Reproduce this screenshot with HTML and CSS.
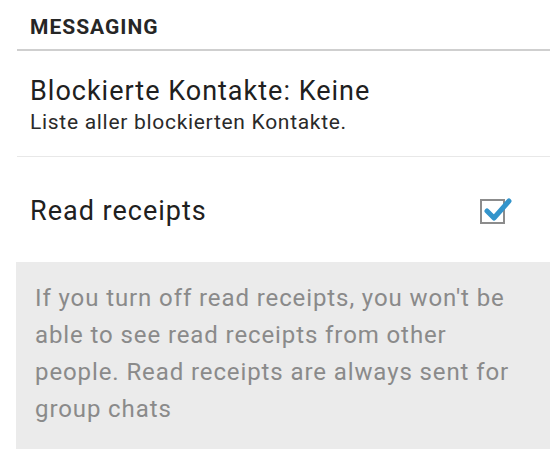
FILE: index.html
```html
<!DOCTYPE html>
<html>
<head>
    <meta charset="utf-8">
    <title>Messaging</title>
    <link rel="stylesheet" href="styles.css">
</head>

<body>
    <div class="prefs">
        <div class="category">MESSAGING</div>

        <div class="pref">
            <div class="pref-title">Blockierte Kontakte: Keine</div>
            <div class="pref-summary">Liste aller blockierten Kontakte.</div>
        </div>

        <div class="pref pref-check">
            <div class="pref-title">Read receipts</div>
            <div class="checkbox">
                <svg width="32" height="32" viewBox="0 0 32 32">
                    <path d="M5 17 L12 24 L27 7" fill="none" stroke="#3394cb" stroke-width="5" stroke-linecap="round" stroke-linejoin="round"/>
                </svg>
            </div>
        </div>
    </div>

    <div class="note">
        If you turn off read receipts, you won't be able to see read receipts from other people. Read receipts are always sent for group chats
    </div>
</body>
</html>
```

FILE: styles.css
```css
body {
    margin: 0;
    padding: 0;
    background-color: #fff;
    font-family: Roboto, "Noto Sans", sans-serif;
    color: #202020;
    overflow: hidden;
}

.prefs {
    margin-left: 17px;
}

.category {
    padding: 15px 0 0 13px;
    height: 34px;
    font-size: 21px;
    font-weight: bold;
    line-height: 25px;
    letter-spacing: 1px;
    color: #262626;
    border-bottom: 2px solid #cfcfcf;
}

.pref {
    padding: 24px 0 21px 13px;
    border-bottom: 1px solid #e8e8e8;
}

.pref-title {
    font-size: 27px;
    line-height: 32px;
    letter-spacing: 1px;
}

.pref-summary {
    font-size: 21px;
    line-height: 26px;
    letter-spacing: 0.7px;
    color: #2a2a2a;
    margin-top: 2px;
}

.pref-check {
    display: flex;
    justify-content: space-between;
    align-items: center;
    height: 60px;
    padding: 24px 45px 21px 13px;
    border-bottom: none;
}

.checkbox {
    position: relative;
    width: 21px;
    height: 21px;
    border: 2px solid #8c8c8c;
}

.checkbox svg {
    position: absolute;
    left: 0;
    top: -7px;
}

.note {
    margin-left: 16px;
    padding: 18px 32px 21px 19px;
    background-color: #ebebeb;
    color: #8a8a8a;
    font-size: 24px;
    line-height: 37px;
    letter-spacing: 0.9px;
}
```
